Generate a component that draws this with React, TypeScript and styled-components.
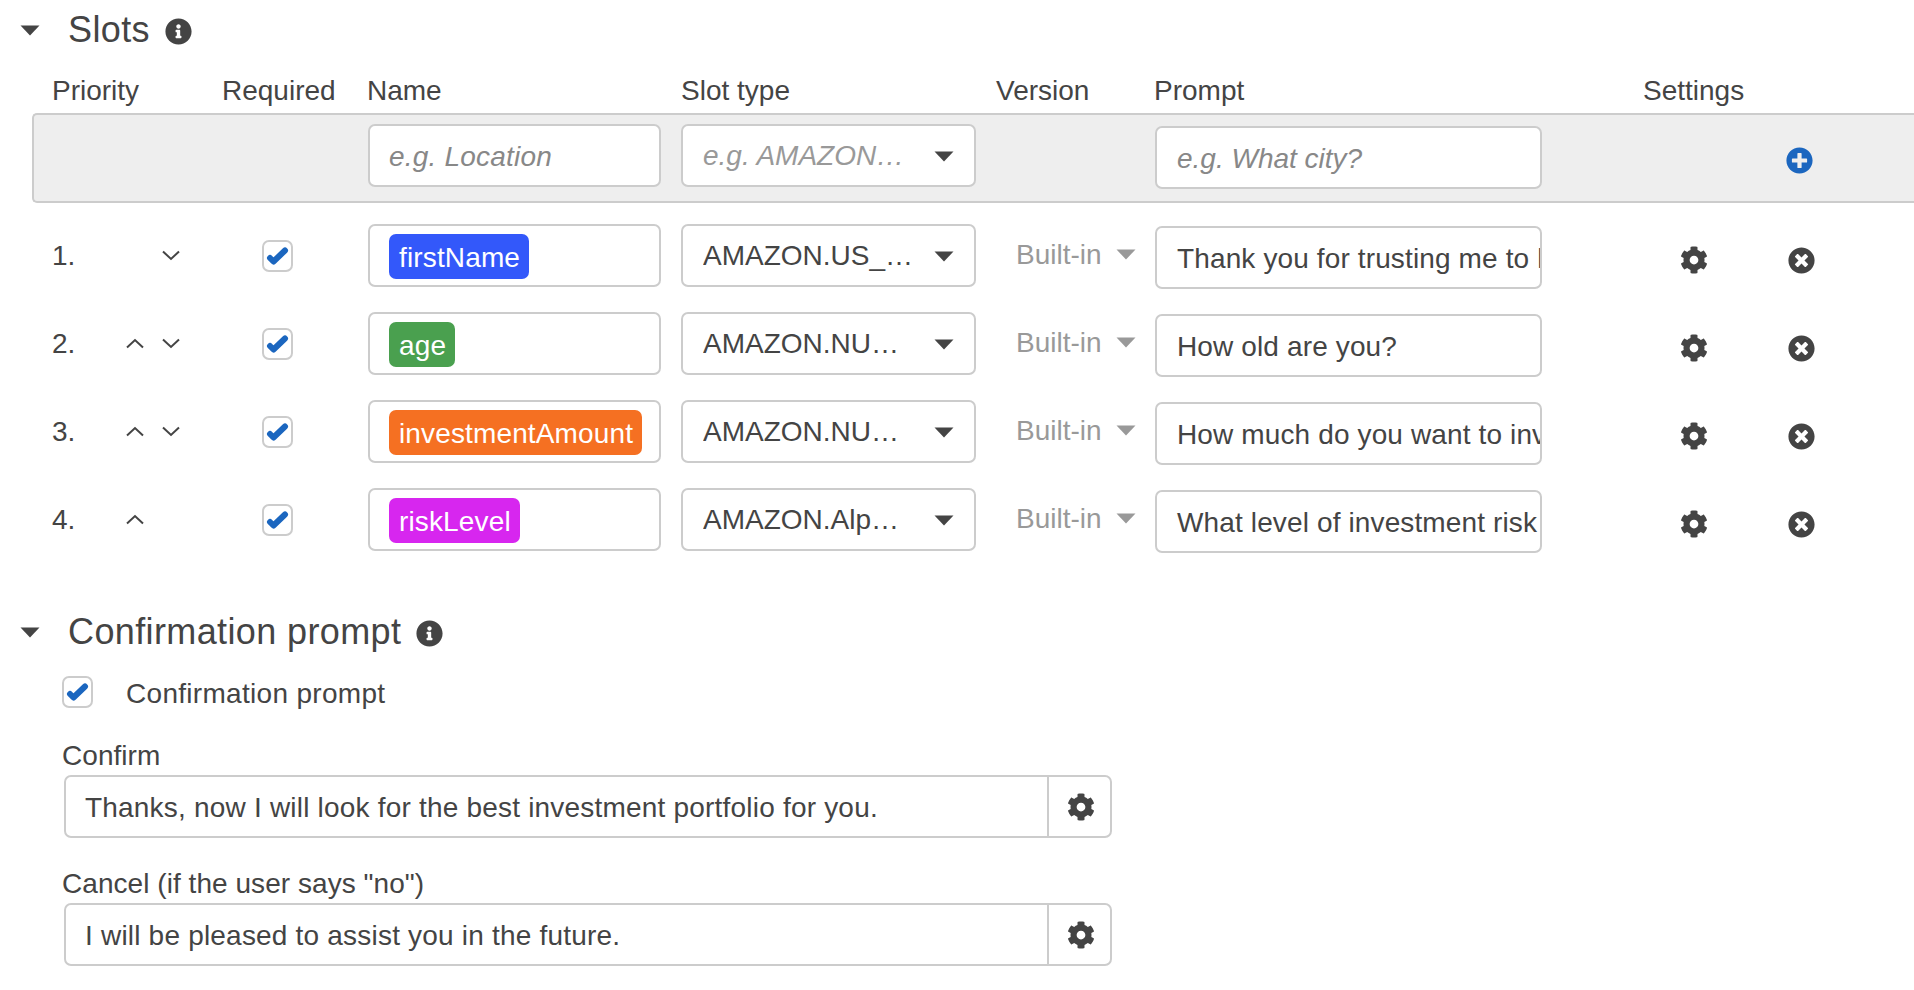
import React from "react";
import styled, { createGlobalStyle, css } from "styled-components";
import { FaCog, FaInfoCircle, FaPlusCircle, FaTimesCircle } from "react-icons/fa";

const Global = createGlobalStyle`
  html, body { margin: 0; padding: 0; background: #fff; }
  body { font-family: "Liberation Sans", Arial, sans-serif; font-size: 28px; color: #444; overflow: hidden; }
  * { box-sizing: border-box; }
`;

const Page = styled.div`
  width: 1914px;
  height: 990px;
  overflow: hidden;
`;

const SectionHead = styled.div<{ $gap?: number }>`
  display: flex;
  align-items: center;
  height: 56px;
  padding-left: 20px;
  margin-top: ${(p) => p.$gap ?? 0}px;
`;

const Title = styled.h2`
  margin: 0 15px 0 28px;
  padding-top: 3px;
  font-size: 36px;
  font-weight: 400;
  line-height: 56px;
  letter-spacing: 0.38px;
  color: #444;
`;

const InfoIcon = styled(FaInfoCircle)`
  width: 27px;
  height: 27px;
  color: #444;
  margin-top: 7px;
`;

const Disclosure = styled.svg`
  width: 20px;
  height: 11px;
  flex: none;
  margin-top: 5px;
  fill: #444;
`;

const columns = css`
  display: grid;
  grid-template-columns: 170px 145px 314px 315px 158px 489px 107px 1fr;
`;

const HeaderRow = styled.div`
  ${columns}
  height: 57px;
  padding: 14px 0 0 52px;
  line-height: 42px;
`;

const AddRow = styled.div`
  ${columns}
  height: 90px;
  margin-left: 32px;
  padding: 9px 0 0 18px;
  background: #eee;
  border: 2px solid #ccc;
  border-right: 0;
  border-radius: 5px 0 0 5px;
`;

const SlotList = styled.div`
  display: flex;
  flex-direction: column;
  gap: 23px;
  margin-top: 21px;
`;

const SlotRow = styled.div`
  ${columns}
  padding-left: 52px;
`;

const field = css`
  height: 63px;
  background: #fff;
  border: 2px solid #ccc;
  border-radius: 7px;
  white-space: nowrap;
  overflow: hidden;
  display: flex;
  align-items: center;
`;

const NameField = styled.div`
  ${field}
  width: 293px;
  margin-left: 1px;
  padding: 2px 19px 0;
`;

const SelectField = styled.div`
  ${field}
  width: 295px;
  padding: 1px 20px 0 20px;
  gap: 20px;
`;

const SelectText = styled.span<{ $placeholder?: boolean }>`
  flex: 1;
  min-width: 0;
  overflow: hidden;
  text-overflow: ellipsis;
  white-space: nowrap;
  color: ${(p) => (p.$placeholder ? "#999" : "#444")};
  font-style: ${(p) => (p.$placeholder ? "italic" : "normal")};
`;

const PromptField = styled.div`
  ${field}
  width: 387px;
  margin: 2px 0 0 1px;
  padding: 3px 0 0 20px;
  letter-spacing: 0.13px;
`;

const Placeholder = styled.span<{ $spacing: number }>`
  color: #888;
  font-style: italic;
  letter-spacing: ${(p) => p.$spacing}px;
`;

const Caret = styled.svg<{ $muted?: boolean }>`
  width: 20px;
  height: 11px;
  flex: none;
  fill: ${(p) => (p.$muted ? "#999" : "#444")};
`;

const Tag = styled.span<{ $color: string }>`
  display: inline-block;
  height: 45px;
  padding: 0 9px 0 10px;
  line-height: 47px;
  letter-spacing: 0.14px;
  color: #fff;
  border-radius: 7px;
  background: ${(p) => p.$color};
`;

const PriorityCell = styled.div`
  display: grid;
  grid-template-columns: 56px 18px 18px;
  column-gap: 18px;
  align-items: center;
  height: 63px;
`;

const Chevron = styled.svg`
  width: 18px;
  height: 11px;
  fill: none;
  stroke: #444;
  stroke-width: 2;
`;

const CheckBox = styled.span`
  display: inline-flex;
  align-items: center;
  justify-content: center;
  width: 31px;
  height: 32px;
  background: #fff;
  border: 2px solid #ccc;
  border-radius: 7px;
  flex: none;
`;

const CheckMark = styled.svg`
  width: 23px;
  height: 20px;
  fill: none;
  stroke: #1b66bf;
  stroke-width: 6;
  stroke-linecap: round;
  stroke-linejoin: round;
`;

const RequiredCell = styled.div`
  padding: 16px 0 0 40px;
`;

const VersionCell = styled.div`
  display: flex;
  align-items: center;
  gap: 14px;
  height: 63px;
  padding: 0 0 2px 20px;
  color: #999;
`;

const IconCell = styled.div<{ $inset: number }>`
  display: flex;
  align-items: center;
  height: 63px;
  padding: 9px 0 0 ${(p) => p.$inset}px;
`;

const Gear = styled(FaCog)`
  width: 28px;
  height: 28px;
  color: #444;
`;

const Remove = styled(FaTimesCircle)`
  width: 27px;
  height: 27px;
  color: #444;
`;

const Add = styled(FaPlusCircle)`
  width: 27px;
  height: 27px;
  color: #1b66bf;
`;

const ConfirmBody = styled.div`
  padding-left: 62px;
`;

const CheckRow = styled.label`
  display: flex;
  align-items: center;
  gap: 33px;
  margin-top: 18px;
  height: 32px;
  letter-spacing: 0.3px;
`;

const CheckLabel = styled.span`
  padding-top: 3px;
`;

const FieldLabel = styled.div<{ $gap: number }>`
  margin-top: ${(p) => p.$gap}px;
  height: 32px;
  line-height: 34px;
  letter-spacing: 0.05px;
`;

const InputGroup = styled.div`
  display: flex;
  width: 1048px;
  height: 63px;
  margin: 4px 0 0 2px;
  border: 2px solid #ccc;
  border-radius: 7px;
  overflow: hidden;
`;

const GroupText = styled.div`
  flex: 1;
  display: flex;
  align-items: center;
  padding: 2px 0 0 19px;
  white-space: nowrap;
  letter-spacing: 0.2px;
`;

const GroupButton = styled.div`
  width: 63px;
  display: flex;
  align-items: center;
  justify-content: center;
  padding-left: 2px;
  border-left: 2px solid #ccc;
`;

const Down = () => (
  <Caret viewBox="0 0 20 11"><path d="M0.5 0.5h19L10 10.5z" /></Caret>
);
const Muted = () => (
  <Caret $muted viewBox="0 0 20 11"><path d="M0.5 0.5h19L10 10.5z" /></Caret>
);
const ChevronUp = () => (
  <Chevron viewBox="0 0 18 11"><path d="M1 9.5L9 2l8 7.5" /></Chevron>
);
const ChevronDown = () => (
  <Chevron viewBox="0 0 18 11"><path d="M1 1.5L9 9l8-7.5" /></Chevron>
);
const Checked = () => (
  <CheckBox>
    <CheckMark viewBox="0 0 23 20"><path d="M4 12l3.5 3.5L19 4.5" /></CheckMark>
  </CheckBox>
);

const slots = [
  { name: "firstName", color: "#3358fa", type: "AMAZON.US_FIRST_NAME", prompt: "Thank you for trusting me to look after your investments", up: false, down: true },
  { name: "age", color: "#4aa04f", type: "AMAZON.NUMBER", prompt: "How old are you?", up: true, down: true },
  { name: "investmentAmount", color: "#f57022", type: "AMAZON.NUMBER", prompt: "How much do you want to invest?", up: true, down: true },
  { name: "riskLevel", color: "#d726ef", type: "AMAZON.AlphaNumeric", prompt: "What level of investment risk do you want to take?", up: true, down: false },
];

export default function App() {
  return (
    <Page>
      <Global />
      <SectionHead>
        <Disclosure viewBox="0 0 20 11"><path d="M0.5 0.5h19L10 10.5z" /></Disclosure>
        <Title>Slots</Title>
        <InfoIcon />
      </SectionHead>
      <HeaderRow>
        <div>Priority</div>
        <div>Required</div>
        <div>Name</div>
        <div>Slot type</div>
        <div>Version</div>
        <div>Prompt</div>
        <div>Settings</div>
        <div />
      </HeaderRow>
      <AddRow>
        <div />
        <div />
        <NameField><Placeholder $spacing={0.2}>e.g. Location</Placeholder></NameField>
        <SelectField>
          <SelectText $placeholder>e.g. AMAZON_CITY</SelectText>
          <Down />
        </SelectField>
        <div />
        <PromptField><Placeholder $spacing={0}>e.g. What city?</Placeholder></PromptField>
        <div />
        <IconCell $inset={36}><Add /></IconCell>
      </AddRow>
      <SlotList>
        {slots.map((s, i) => (
          <SlotRow key={s.name}>
            <PriorityCell>
              <span>{i + 1}.</span>
              {s.up ? <ChevronUp /> : <span />}
              {s.down ? <ChevronDown /> : <span />}
            </PriorityCell>
            <RequiredCell><Checked /></RequiredCell>
            <NameField><Tag $color={s.color}>{s.name}</Tag></NameField>
            <SelectField>
              <SelectText>{s.type}</SelectText>
              <Down />
            </SelectField>
            <VersionCell>Built-in <Muted /></VersionCell>
            <PromptField>{s.prompt}</PromptField>
            <IconCell $inset={37}><Gear /></IconCell>
            <IconCell $inset={38}><Remove /></IconCell>
          </SlotRow>
        ))}
      </SlotList>
      <SectionHead $gap={49}>
        <Disclosure viewBox="0 0 20 11"><path d="M0.5 0.5h19L10 10.5z" /></Disclosure>
        <Title>Confirmation prompt</Title>
        <InfoIcon />
      </SectionHead>
      <ConfirmBody>
        <CheckRow><Checked /><CheckLabel>Confirmation prompt</CheckLabel></CheckRow>
        <FieldLabel $gap={31}>Confirm</FieldLabel>
        <InputGroup>
          <GroupText>Thanks, now I will look for the best investment portfolio for you.</GroupText>
          <GroupButton><Gear /></GroupButton>
        </InputGroup>
        <FieldLabel $gap={29}>Cancel (if the user says "no")</FieldLabel>
        <InputGroup>
          <GroupText>I will be pleased to assist you in the future.</GroupText>
          <GroupButton><Gear /></GroupButton>
        </InputGroup>
      </ConfirmBody>
    </Page>
  );
}
